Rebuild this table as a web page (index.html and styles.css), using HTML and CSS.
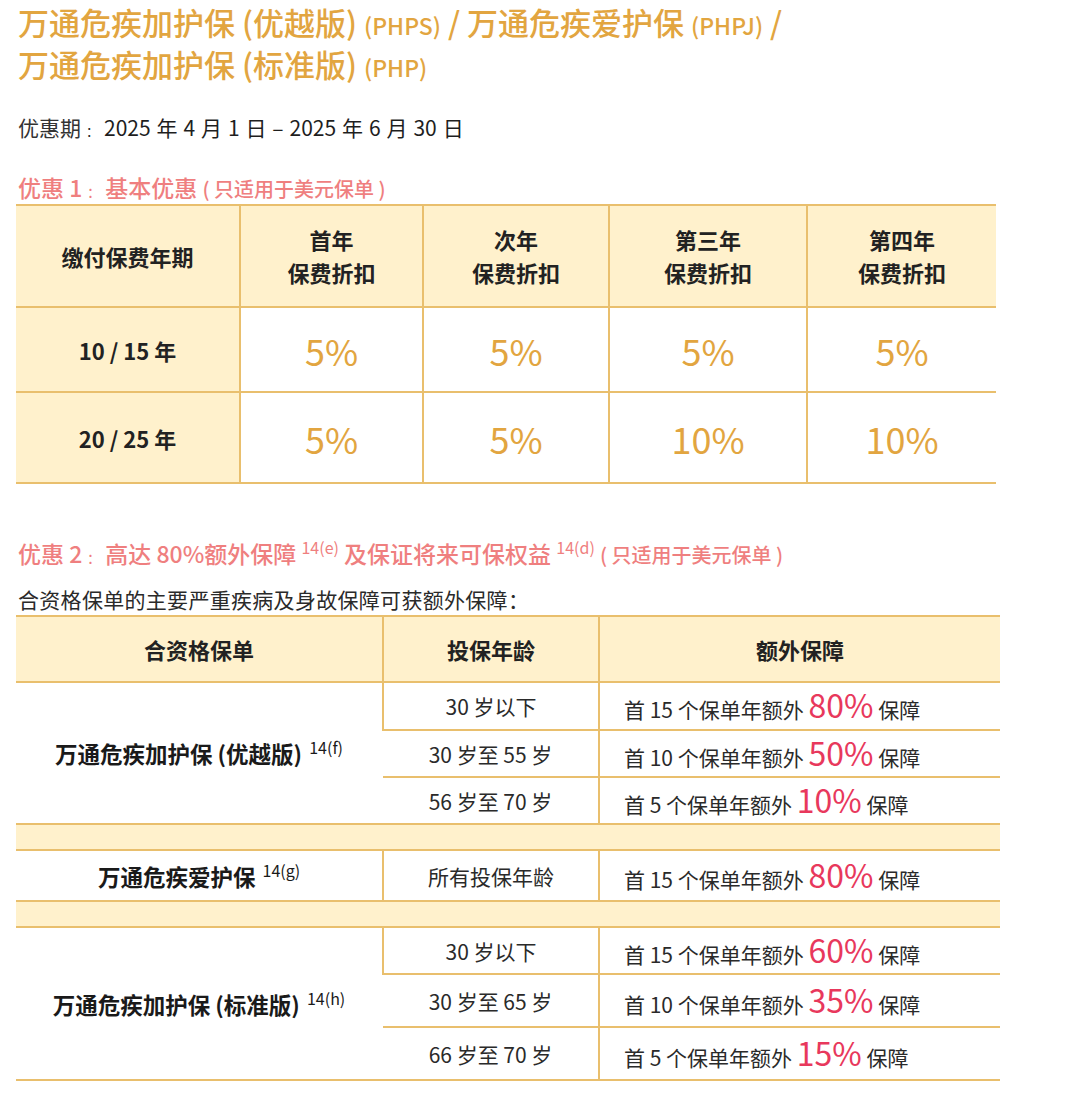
FILE: index.html
```html
<!DOCTYPE html>
<html lang="zh-CN">
<head>
<meta charset="utf-8">
<link rel="stylesheet" href="styles.css">
</head>
<body>
<div class="page">
  <h1 class="title">
    <span class="t-line">万通危疾加护保 (优越版) <small>(PHPS)</small> / 万通危疾爱护保 <small>(PHPJ)</small> /</span>
    <span class="t-line">万通危疾加护保 (标准版) <small>(PHP)</small></span>
  </h1>

  <p class="period"><span class="lbl">优惠期</span><span class="colon">：</span>2025 年 4 月 1 日 – 2025 年 6 月 30 日</p>

  <h2 class="sec sec1">优惠 1<span class="colon">：</span>基本优惠 <span class="note">( 只适用于美元保单 )</span></h2>

  <table class="t1">
    <colgroup>
      <col style="width:224px"><col style="width:183px"><col style="width:186px"><col style="width:198px"><col style="width:189px">
    </colgroup>
    <thead>
      <tr>
        <th class="cream">缴付保费年期</th>
        <th>首年<br>保费折扣</th>
        <th>次年<br>保费折扣</th>
        <th>第三年<br>保费折扣</th>
        <th>第四年<br>保费折扣</th>
      </tr>
    </thead>
    <tbody>
      <tr class="r1">
        <th class="cream">10 / 15 年</th>
        <td>5%</td><td>5%</td><td>5%</td><td>5%</td>
      </tr>
      <tr class="r2">
        <th class="cream">20 / 25 年</th>
        <td>5%</td><td>5%</td><td>10%</td><td>10%</td>
      </tr>
    </tbody>
  </table>

  <h2 class="sec sec2">优惠 2<span class="colon">：</span>高达 80%额外保障 <sup>14(e)</sup> 及保证将来可保权益 <sup>14(d)</sup> <span class="note">( 只适用于美元保单 )</span></h2>
  <p class="intro">合资格保单的主要严重疾病及身故保障可获额外保障：</p>

  <table class="t2">
    <colgroup>
      <col style="width:367px"><col style="width:216px"><col style="width:401px">
    </colgroup>
    <thead>
      <tr><th>合资格保单</th><th>投保年龄</th><th>额外保障</th></tr>
    </thead>
    <tbody>
      <tr class="h48">
        <th rowspan="3" class="plan">万通危疾加护保 (优越版) <sup>14(f)</sup></th>
        <td class="age">30 岁以下</td>
        <td class="extra">首 15 个保单年额外 <b>80%</b> 保障</td>
      </tr>
      <tr class="h47 sub">
        <td class="age">30 岁至 55 岁</td>
        <td class="extra">首 10 个保单年额外 <b>50%</b> 保障</td>
      </tr>
      <tr class="h47 sub">
        <td class="age">56 岁至 70 岁</td>
        <td class="extra">首 5 个保单年额外 <b>10%</b> 保障</td>
      </tr>
      <tr class="spacer"><td colspan="3"></td></tr>
      <tr class="h51">
        <th class="plan">万通危疾爱护保 <sup>14(g)</sup></th>
        <td class="age">所有投保年龄</td>
        <td class="extra">首 15 个保单年额外 <b>80%</b> 保障</td>
      </tr>
      <tr class="spacer"><td colspan="3"></td></tr>
      <tr class="h47">
        <th rowspan="3" class="plan">万通危疾加护保 (标准版) <sup>14(h)</sup></th>
        <td class="age">30 岁以下</td>
        <td class="extra">首 15 个保单年额外 <b>60%</b> 保障</td>
      </tr>
      <tr class="h53 sub">
        <td class="age">30 岁至 65 岁</td>
        <td class="extra">首 10 个保单年额外 <b>35%</b> 保障</td>
      </tr>
      <tr class="h53 sub last">
        <td class="age">66 岁至 70 岁</td>
        <td class="extra">首 5 个保单年额外 <b>15%</b> 保障</td>
      </tr>
    </tbody>
  </table>
</div>
</body>
</html>
```

FILE: styles.css
```css
* { box-sizing: border-box; }
html, body { margin: 0; padding: 0; background: #fff; }
body {
  font-family: "Noto Sans CJK SC", "Noto Sans", sans-serif;
  color: #222;
  width: 1080px;
}
.page { padding: 0 16px; }

.title {
  margin: 0;
  padding-top: 1px;
  font-size: 31px;
  font-weight: 500;
  color: #e2a540;
  line-height: 42px;
}
.t-line { display: block; padding-left: 2px; }
.title small { font-size: 23px; font-weight: 500; line-height: 1; }

.period {
  margin: 28px 0 0 2px;
  font-size: 21px;
  line-height: 28px;
  color: #1e1e1e;
  word-spacing: 1.2px;
}
.period .lbl { color: #333; }
.colon { font-size: 13px; margin: 0 5px; line-height: 1; word-spacing: 0; }

.sec {
  margin: 0 0 0 2px;
  font-weight: 500;
  color: #ef7f7f;
  font-size: 23px;
  line-height: 28px;
}
.sec .colon { margin: 0 5px; }
.sec .note { font-size: 20px; line-height: 1; }
.sec1 { margin-top: 32px; }
.sec2 { margin-top: 55px; }
.sec sup { font-size: 16px; font-weight: 400; vertical-align: 9px; line-height: 0; }

.intro {
  margin: 19px 0 0 2px;
  font-size: 21px;
  line-height: 26px;
  color: #2a2a2a;
  letter-spacing: 0.3px;
}

table {
  border-collapse: collapse;
  table-layout: fixed;
}
.t1 { width: 980px; margin-top: 3px; }
.t1 th, .t1 td {
  border-top: 2px solid #e9bf6d;
  border-bottom: 2px solid #e9bf6d;
  border-left: 2px solid #e9bf6d;
  text-align: center;
  padding: 0;
}
.t1 tr > :first-child { border-left: none; }
.t1 thead th {
  background: #fff1cc;
  height: 102px;
  font-size: 22px;
  font-weight: 700;
  line-height: 33px;
  color: #222;
}
.t1 .cream { background: #fff1cc; font-size: 22px; font-weight: 700; color: #222; }
.t1 td {
  font-size: 36px;
  color: #e2a540;
  font-weight: 400;
}
.t1 .r1 > * { height: 85px; }
.t1 .r2 > * { height: 91px; }

.t2 { width: 984px; margin-top: 3px; }
.t2 th, .t2 td {
  border-top: 2px solid #e9bf6d;
  border-bottom: 2px solid #e9bf6d;
  border-left: 2px solid #e9bf6d;
  padding: 0;
  text-align: center;
}
.t2 tr > :first-child { border-left: none; }
.t2 .sub td { border-top: 2px solid #f3d79c; }
.t2 thead th {
  background: #fff1cc;
  height: 66px;
  font-size: 22px;
  font-weight: 700;
  color: #222;
}
.t2 .plan {
  font-size: 22.5px;
  font-weight: 700;
  color: #1a1a1a;
  border-left: none;
}
.t2 .plan sup { font-size: 16px; font-weight: 400; vertical-align: 9px; line-height: 0; margin-left: 2px; }
.t2 .age {
  font-size: 21px;
  color: #2a2a2a;
}
.t2 .extra {
  text-align: left;
  padding-left: 24px;
  font-size: 21px;
  color: #2a2a2a;
}
.t2 .extra b {
  font-size: 32px;
  font-weight: 400;
  color: #e8385c;
  line-height: 1;
}
.t2 .spacer td {
  background: #fff1cc;
  height: 26px;
  border-left: none;
}
.h47 > * { height: 47px; }
.h48 > * { height: 48px; }
.h51 > * { height: 51px; }
.h53 > * { height: 53px; }
```
